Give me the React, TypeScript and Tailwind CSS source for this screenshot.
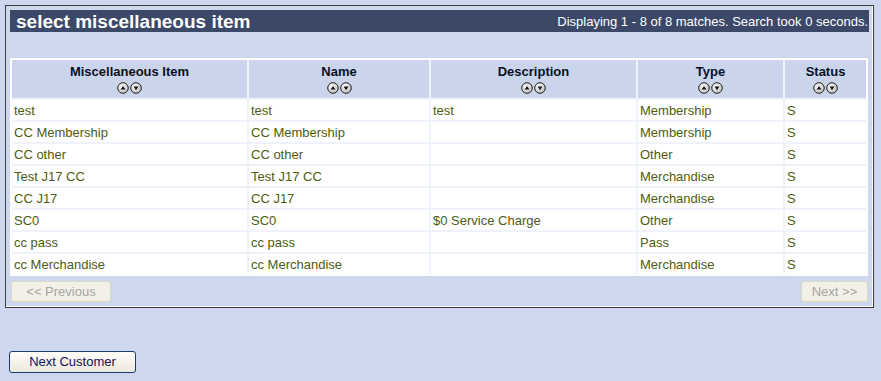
import React from "react"

const rows = [
  ["test", "test", "test", "Membership", "S"],
  ["CC Membership", "CC Membership", "", "Membership", "S"],
  ["CC other", "CC other", "", "Other", "S"],
  ["Test J17 CC", "Test J17 CC", "", "Merchandise", "S"],
  ["CC J17", "CC J17", "", "Merchandise", "S"],
  ["SC0", "SC0", "$0 Service Charge", "Other", "S"],
  ["cc pass", "cc pass", "", "Pass", "S"],
  ["cc Merchandise", "cc Merchandise", "", "Merchandise", "S"],
]

const columns = [
  { label: "Miscellaneous Item", w: "w-[235px]" },
  { label: "Name", w: "w-[180px]" },
  { label: "Description", w: "w-[205px]" },
  { label: "Type", w: "w-[145px]" },
  { label: "Status", w: "w-[81px]" },
]

function SortIcon({ down }: { down?: boolean }) {
  return (
    <svg width="12" height="12" viewBox="0 0 12 12" className="block">
      <defs>
        <radialGradient id={down ? "gd" : "gu"} cx="40%" cy="35%" r="70%">
          <stop offset="0%" stopColor="#ffffff" />
          <stop offset="100%" stopColor="#b8b8b8" />
        </radialGradient>
      </defs>
      <circle cx="6" cy="6" r="5.3" fill={`url(#${down ? "gd" : "gu"})`} stroke="#222" strokeWidth="1" />
      {down ? (
        <polygon points="3.6,4.6 8.4,4.6 6,8.2" fill="#111" />
      ) : (
        <polygon points="3.6,7.6 8.4,7.6 6,4" fill="#111" />
      )}
    </svg>
  )
}

export default function App() {
  return (
    <div
      className="w-[881px] h-[381px] bg-[#cdd7ed] pt-[5px] pl-[5px] text-[13px]"
      style={{ fontFamily: "'Liberation Sans', Arial, sans-serif" }}
    >
      {/* Search result panel */}
      <div className="w-[869px] border border-[#3c3c3c] shadow-[inset_-1px_-1px_0_#ffffff] px-[4px] pt-[4px] pb-[4px]">
        <div className="h-[22px] bg-[#3b4868] flex items-center justify-between pl-[6px] pr-[1px]">
          <span className="text-white font-bold text-[19px] leading-none">select miscellaneous item</span>
          <span className="text-white text-[13px] leading-none">
            Displaying 1 - 8 of 8 matches. Search took 0 seconds.
          </span>
        </div>

        <table className="mt-[26px] w-[858px] border-separate border-spacing-[2px] bg-[#eef2fa] outline-2 outline-white -outline-offset-2 table-fixed">
          <thead>
            <tr>
              {columns.map((c) => (
                <th
                  key={c.label}
                  className={`${c.w} h-[38px] bg-[#cad5ec] text-[#0c1020] font-bold text-[13px] align-top pt-[4px] p-0`}
                >
                  <div className="leading-[15px]">{c.label}</div>
                  <div className="flex justify-center gap-[1px] mt-[3px]">
                    <SortIcon />
                    <SortIcon down />
                  </div>
                </th>
              ))}
            </tr>
          </thead>
          <tbody>
            {rows.map((r, i) => (
              <tr key={i}>
                {r.map((cell, j) => (
                  <td key={j} className="bg-white h-[20px] px-[2px] pt-[1px] pb-0 text-[#4d5c10] leading-[19px] whitespace-nowrap">
                    {cell}
                  </td>
                ))}
              </tr>
            ))}
          </tbody>
        </table>

        <div className="flex justify-between mt-[5px] px-[1px] pb-[1px]">
          <button className="w-[100px] h-[21px] bg-[#f3f1e7] border border-[#dcd8c6] rounded-[3px] text-[#a4a4a4] text-[13px]">
            &lt;&lt; Previous
          </button>
          <button className="w-[67px] h-[21px] bg-[#f3f1e7] border border-[#dcd8c6] rounded-[3px] text-[#a4a4a4] text-[13px]">
            Next &gt;&gt;
          </button>
        </div>
      </div>

      <div className="mt-[43px] pl-[4px]">
        <button className="w-[127px] h-[22px] rounded-[3px] border border-[#1d3a70] bg-gradient-to-b from-[#fffefa] to-[#ebe8dc] text-[#170f55] text-[13px]">
          Next Customer
        </button>
      </div>
    </div>
  )
}
